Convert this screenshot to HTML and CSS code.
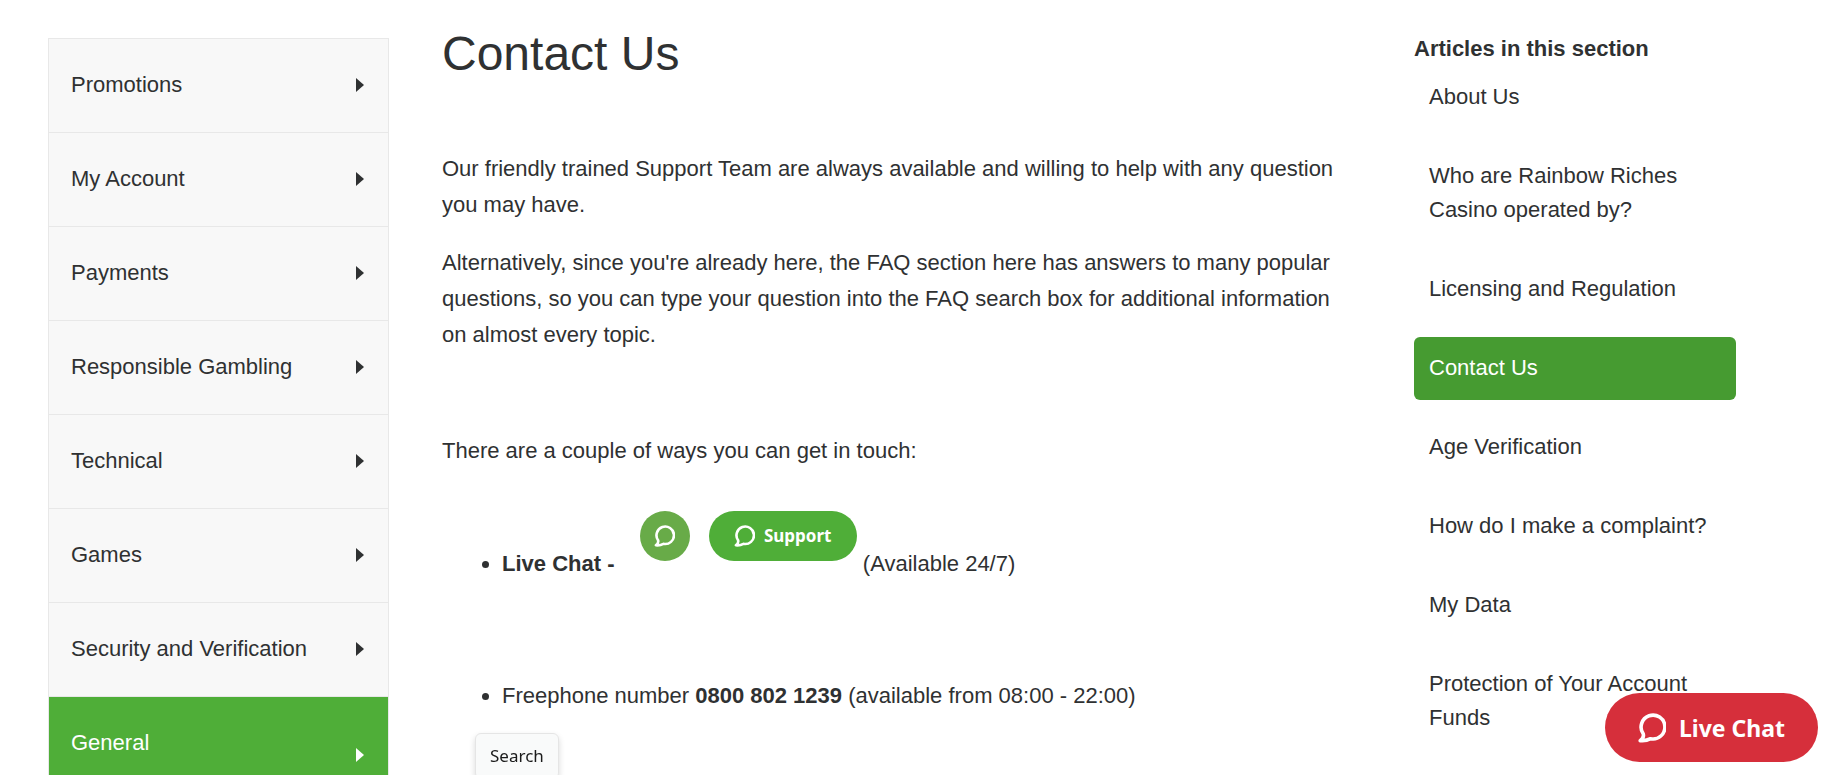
FILE: index.html
```
<!DOCTYPE html>
<html lang="en">
<head>
    <meta charset="UTF-8">
    <meta name="viewport" content="width=device-width, initial-scale=1.0">
    <title>Contact Us</title>
    <link rel="stylesheet" href="styles.css">
</head>
<body>
    <svg class="sprite" aria-hidden="true">
        <symbol id="chat-icon" viewBox="0 0 28 30">
            <path d="M5.2 20.8 A11.9 11.9 0 1 1 12.6 25.7 Q8 28.2 2.2 27.6 Q6.4 24.6 5.2 20.8 Z" fill="none" stroke="currentColor" stroke-width="3.6" stroke-linejoin="round"/>
        </symbol>
    </svg>

    <div class="page">
        <nav class="categories">
            <a href="#" class="category">Promotions</a>
            <a href="#" class="category">My Account</a>
            <a href="#" class="category">Payments</a>
            <a href="#" class="category">Responsible Gambling</a>
            <a href="#" class="category">Technical</a>
            <a href="#" class="category">Games</a>
            <a href="#" class="category">Security and Verification</a>
            <a href="#" class="category active">General</a>
        </nav>

        <main class="article">
            <h1>Contact Us</h1>
            <p>Our friendly trained Support Team are always available and willing to help with any question you may have.</p>
            <p>Alternatively, since you're already here, the FAQ section here has answers to many popular questions, so you can type your question into the FAQ search box for additional information on almost every topic.</p>
            <p>&nbsp;</p>
            <p>There are a couple of ways you can get in touch:</p>
            <ul class="contact-list">
                <li>
                    <strong>Live Chat -</strong>
                    <span class="chat-badge chat-round"><svg class="badge-icon"><use href="#chat-icon"/></svg></span>
                    <span class="chat-badge chat-pill"><svg class="badge-icon"><use href="#chat-icon"/></svg>Support</span>
                    (Available 24/7)
                </li>
                <li>Freephone number <strong>0800 802 1239</strong> (available from 08:00 - 22:00)</li>
            </ul>
        </main>

        <aside class="section-articles">
            <h2>Articles in this section</h2>
            <ul>
                <li><a href="#">About Us</a></li>
                <li><a href="#">Who are Rainbow Riches Casino operated by?</a></li>
                <li><a href="#">Licensing and Regulation</a></li>
                <li><a href="#" class="current">Contact Us</a></li>
                <li><a href="#">Age Verification</a></li>
                <li><a href="#">How do I make a complaint?</a></li>
                <li><a href="#">My Data</a></li>
                <li><a href="#">Protection of Your Account Funds</a></li>
            </ul>
        </aside>
    </div>

    <div class="tooltip" role="tooltip">Search</div>

    <button type="button" class="live-chat">
        <svg class="live-chat-icon"><use href="#chat-icon"/></svg>
        Live Chat
    </button>
</body>
</html>
```

FILE: styles.css
```
:root {
    --text-color: #2f3132;
    --green: #4fae38;
    --dark-green: #469b31;
    --red: #d62f3b;
    --panel-bg: #f8f8f8;
    --border-color: #e8e8e8;
}

* {
    margin: 0;
    padding: 0;
    box-sizing: border-box;
}

body {
    height: 100vh;
    overflow: hidden;
    font-family: "Liberation Sans", Arial, Helvetica, sans-serif;
    font-size: 22px;
    line-height: 36px;
    color: var(--text-color);
    background-color: white;
}

a {
    color: inherit;
    text-decoration: none;
}

.sprite {
    display: none;
}

.page {
    display: grid;
    grid-template-columns: 341px minmax(0, 1fr) 322px;
    column-gap: 53px;
    align-items: start;
    height: 100%;
    overflow: hidden;
    padding: 25px 110px 0 48px;
}

/* Left hand categories */
.categories {
    margin-top: 13px;
    border: 1px solid var(--border-color);
    background-color: var(--panel-bg);
}

.category {
    display: flex;
    justify-content: space-between;
    padding: 28px 24px 29px 22px;
    border-bottom: 1px solid var(--border-color);
}

.category::after {
    content: "";
    align-self: center;
    border: 7px solid transparent;
    border-left: 8px solid currentColor;
    border-right: none;
}

.category.active {
    min-height: 118px;
    color: white;
    background-color: var(--green);
}

/* Article */
.article {
    padding-right: 8px;
}

h1 {
    margin-bottom: 68px;
    font-size: 48px;
    font-weight: 400;
    line-height: 58px;
}

.article p {
    margin-bottom: 22px;
}

.contact-list {
    margin-top: 42px;
    padding-left: 60px;
}

.contact-list li {
    margin-bottom: 96px;
}

.chat-badge {
    display: inline-flex;
    align-items: center;
    justify-content: center;
    height: 50px;
    vertical-align: 24px;
    color: white;
    font-family: "Noto Sans", sans-serif;
    font-size: 17px;
    font-weight: 700;
}

.chat-round {
    width: 50px;
    margin: 0 13px 0 19px;
    border-radius: 50%;
    background-color: #68ab48;
}

.chat-pill {
    gap: 9px;
    width: 148px;
    border-radius: 25px;
    background-color: var(--green);
}

.badge-icon {
    width: 21px;
    height: 22px;
}

/* Right hand article list */
.section-articles h2 {
    margin-top: 7px;
    font-size: 22px;
    line-height: 34px;
}

.section-articles ul {
    list-style: none;
}

.section-articles li {
    margin-bottom: 16px;
}

.section-articles a {
    display: block;
    padding: 14px 15px 15px;
    border-radius: 6px;
    line-height: 34px;
}

.section-articles .current {
    color: white;
    background-color: var(--dark-green);
}

/* Overlays */
.tooltip {
    position: fixed;
    bottom: -4px;
    left: 475px;
    padding: 4px 14px;
    border: 1px solid #e5e5e5;
    border-radius: 6px;
    background-color: #f9fafa;
    box-shadow: 0 3px 6px rgba(0, 0, 0, 0.15);
    color: #1b1b1b;
    font-family: "Noto Sans", sans-serif;
    font-size: 17px;
}

.live-chat {
    position: fixed;
    right: 28px;
    bottom: 13px;
    display: flex;
    align-items: center;
    justify-content: center;
    gap: 13px;
    width: 213px;
    height: 69px;
    border: none;
    border-radius: 35px;
    background-color: var(--red);
    color: white;
    font-family: "Noto Sans", sans-serif;
    font-size: 23px;
    font-weight: 700;
    cursor: pointer;
}

.live-chat-icon {
    width: 28px;
    height: 30px;
}

@media (max-width: 1100px) {
    .page {
        grid-template-columns: 1fr;
        height: auto;
        padding: 24px;
    }

    body {
        height: auto;
        overflow: auto;
    }
}
```
